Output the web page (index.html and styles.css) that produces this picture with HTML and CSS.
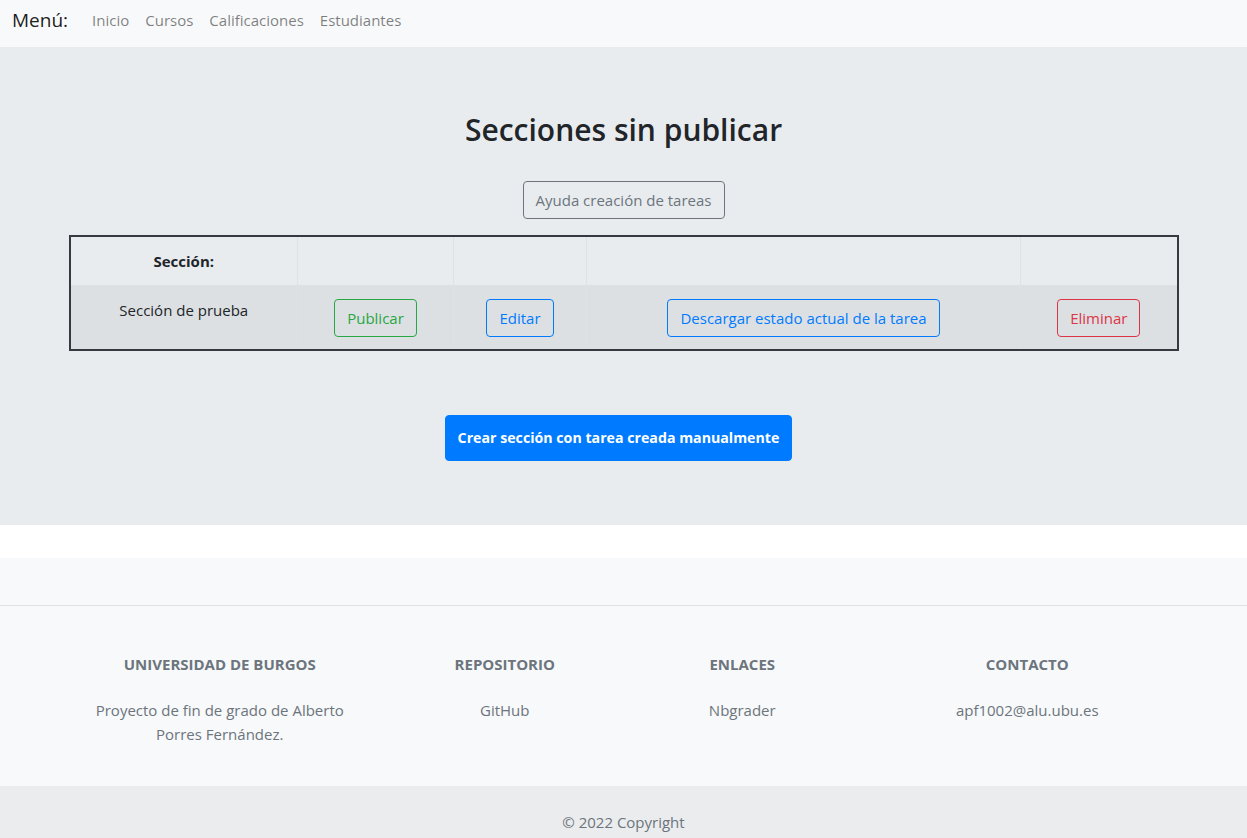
FILE: index.html
```html
<!DOCTYPE html>
<html lang="es">
<head>
<meta charset="utf-8">
<title>Secciones sin publicar</title>
<link rel="stylesheet" href="styles.css">
</head>
<body>
<nav class="navbar">
  <span class="brand">Menú:</span>
  <a class="nav-link" href="#">Inicio</a>
  <a class="nav-link" href="#">Cursos</a>
  <a class="nav-link" href="#">Calificaciones</a>
  <a class="nav-link" href="#">Estudiantes</a>
</nav>

<main class="jumbotron">
  <h2 class="title">Secciones sin publicar</h2>
  <div class="help-row">
    <button class="btn btn-outline-secondary">Ayuda creación de tareas</button>
  </div>
  <div class="container">
    <table class="sections">
      <colgroup>
        <col class="c1"><col class="c2"><col class="c3"><col class="c4"><col class="c5">
      </colgroup>
      <thead>
        <tr><th>Sección:</th><th></th><th></th><th></th><th></th></tr>
      </thead>
      <tbody>
        <tr>
          <td>Sección de prueba</td>
          <td><button class="btn btn-outline-success">Publicar</button></td>
          <td><button class="btn btn-outline-primary">Editar</button></td>
          <td><button class="btn btn-outline-primary">Descargar estado actual de la tarea</button></td>
          <td><button class="btn btn-outline-danger">Eliminar</button></td>
        </tr>
      </tbody>
    </table>
  </div>
  <div class="create-row">
    <button class="btn btn-primary btn-create">Crear sección con tarea creada manualmente</button>
  </div>
</main>

<footer class="footer">
  <section class="footer-top"></section>
  <section class="footer-cols">
    <div class="fcol fcol-wide">
      <h6>Universidad de Burgos</h6>
      <p>Proyecto de fin de grado de Alberto Porres Fernández.</p>
    </div>
    <div class="fcol">
      <h6>Repositorio</h6>
      <p>GitHub</p>
    </div>
    <div class="fcol">
      <h6>Enlaces</h6>
      <p>Nbgrader</p>
    </div>
    <div class="fcol fcol-wide">
      <h6>Contacto</h6>
      <p>apf1002@alu.ubu.es</p>
    </div>
  </section>
  <div class="copyright">© 2022 Copyright</div>
</footer>
</body>
</html>
```
FILE: styles.css
```css
* { box-sizing: border-box; }
html, body { margin: 0; padding: 0; }
body {
  font-family: "Open Sans", "Noto Sans", "Liberation Sans", sans-serif;
  font-size: 15px;
  line-height: 24px;
  color: #212529;
  background: #fff;
}

.navbar {
  display: flex;
  align-items: center;
  height: 47px;
  padding: 0 12px 8px 12px;
  background: #f8f9fa;
}
.brand {
  font-size: 19px;
  line-height: 40px;
  color: rgba(0,0,0,.9);
  margin-right: 16px;
}
.nav-link {
  color: rgba(0,0,0,.5);
  text-decoration: none;
  padding: 0 8px;
  line-height: 40px;
}

.jumbotron {
  background: #e9ecef;
  padding: 64px 0 64px;
  margin-bottom: 33px;
}
.title {
  margin: 0;
  text-align: center;
  font-size: 30px;
  line-height: 38px;
  font-weight: 600;
  color: #212529;
}
.help-row { text-align: center; margin-top: 32px; }

.btn {
  display: inline-block;
  font-family: inherit;
  font-size: 15px;
  line-height: 24px;
  padding: 6px 12px;
  border: 1px solid transparent;
  border-radius: 4px;
  background: transparent;
  cursor: pointer;
}
.btn-outline-secondary { color: #6c757d; border-color: #6c757d; }
.btn-outline-success { color: #28a745; border-color: #28a745; }
.btn-outline-primary { color: #007bff; border-color: #007bff; }
.btn-outline-danger { color: #dc3545; border-color: #dc3545; }
.btn-primary { color: #fff; background: #007bff; border-color: #007bff; }
.btn-create { font-size: 14.2px; font-weight: 700; padding: 10px 12px; margin-right: 10px; }

.container {
  width: 1110px;
  margin: 16px auto 0;
}
.sections {
  width: 1108px;
  table-layout: fixed;
  border-collapse: collapse;
  border: 2px solid #343a40;
}
.c1 { width: 228px; }
.c2 { width: 156px; }
.c3 { width: 133px; }
.c4 { width: 434px; }
.c5 { width: 157px; }
.sections th, .sections td {
  padding: 12px;
  text-align: center;
  vertical-align: top;
  border-left: 1px solid #dee2e6;
}
.sections th:first-child, .sections td:first-child { border-left: none; }
.sections th { height: 48px; font-weight: 700; }
.sections td { padding: 14px 12px 12px; }
.sections td:first-child { padding-top: 13px; }
.sections tbody tr { background: rgba(0,0,0,.05); }

.create-row { text-align: center; margin-top: 64px; }

.footer {
  background: #f8f9fa;
  color: #6c757d;
}
.footer-top {
  height: 48px;
  border-bottom: 1px solid #dee2e6;
}
.footer-cols {
  width: 1140px;
  margin: 0 auto;
  padding-top: 48px;
  display: flex;
  justify-content: space-around;
  text-align: center;
}
.fcol {
  width: 190px;
  padding: 0 15px;
  margin-bottom: 24px;
}
.fcol-wide { width: 285px; }
.fcol h6 {
  margin: 0 0 24px;
  font-size: 15px;
  line-height: 20px;
  font-weight: 700;
  text-transform: uppercase;
}
.fcol p { margin: 0 0 16px; }
.copyright {
  background: rgba(0,0,0,.05);
  text-align: center;
  padding: 24px;
}
```
